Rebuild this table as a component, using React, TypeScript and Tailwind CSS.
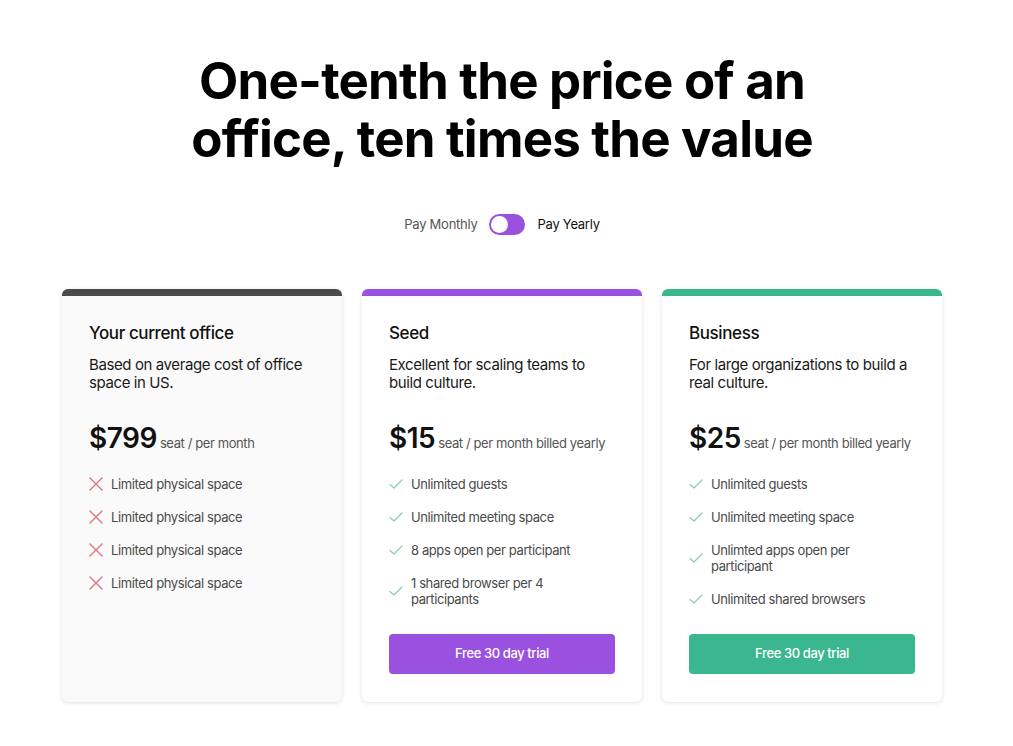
import React from "react";

const font = { fontFamily: "Inter, 'Noto Sans', sans-serif" };

function XIcon() {
  return (
    <svg width="16" height="16" viewBox="0 0 16 16" fill="none" className="shrink-0 -ml-[1px]">
      <path d="M2 2L14 14M14 2L2 14" stroke="#e0707f" strokeWidth="1.3" strokeLinecap="round" />
    </svg>
  );
}

function Check() {
  return (
    <svg width="16" height="16" viewBox="0 0 16 16" fill="none" className="shrink-0 -ml-[1px]">
      <path d="M2 8.5L6 12L14 4" stroke="#8ccbb3" strokeWidth="1.2" strokeLinecap="round" strokeLinejoin="round" />
    </svg>
  );
}

type Plan = {
  title: string;
  desc: string;
  price: string;
  unit: string;
  bar: string;
  bg: string;
  features: string[];
  negative?: boolean;
  button?: string;
};

const plans: Plan[] = [
  {
    title: "Your current office",
    desc: "Based on average cost of office space in US.",
    price: "$799",
    unit: "seat / per month",
    bar: "bg-[#4a4a4a]",
    bg: "bg-[#fafafa]",
    features: ["Limited physical space", "Limited physical space", "Limited physical space", "Limited physical space"],
    negative: true,
  },
  {
    title: "Seed",
    desc: "Excellent for scaling teams to build culture.",
    price: "$15",
    unit: "seat / per month billed yearly",
    bar: "bg-[#9b51e0]",
    bg: "bg-white",
    features: ["Unlimited guests", "Unlimited meeting space", "8 apps open per participant", "1 shared browser per 4 participants"],
    button: "bg-[#9b51e0]",
  },
  {
    title: "Business",
    desc: "For large organizations to build a real culture.",
    price: "$25",
    unit: "seat / per month billed yearly",
    bar: "bg-[#3bb78f]",
    bg: "bg-white",
    features: ["Unlimited guests", "Unlimited meeting space", "Unlimted apps open per participant", "Unlimited shared browsers"],
    button: "bg-[#3bb78f]",
  },
];

function Card({ p }: { p: Plan }) {
  return (
    <div className={`w-[280px] rounded-[6px] overflow-hidden ${p.bg} shadow-[0_1px_4px_rgba(0,0,0,0.12)] flex flex-col`}>
      <div className={`h-[7px] shrink-0 ${p.bar}`} />
      <div className="px-[27px] pt-[26px] pb-[28px] flex flex-col tracking-[-0.025em]">
        <div className="text-[17px] font-medium text-[#111] leading-[22px]">{p.title}</div>
        <div className="mt-[12px] text-[15px] text-[#1a1a1a] leading-[18px]">{p.desc}</div>
        <div className="mt-[29px] flex items-baseline gap-[3px]">
          <span className="text-[28px] font-semibold text-[#111] leading-[34px] tracking-[-0.5px]">{p.price}</span>
          <span className="text-[13px] text-[#555]">{p.unit}</span>
        </div>
        <div className="mt-[21px] flex flex-col gap-[17px]">
          {p.features.map((f, i) => (
            <div key={i} className="flex items-center gap-[7px]">
              {p.negative ? <XIcon /> : <Check />}
              <span className="text-[13px] text-[#4a4a4a] leading-[16px] max-w-[180px]">{f}</span>
            </div>
          ))}
        </div>
        {p.button && (
          <button className={`mt-[27px] h-[40px] w-[226px] rounded-[4px] ${p.button} text-white text-[13px] font-medium`}>
            Free 30 day trial
          </button>
        )}
      </div>
    </div>
  );
}

export default function App() {
  return (
    <div style={font} className="min-h-[746px] bg-white flex flex-col items-center pr-[9px]">
      <h1 className="mt-[52px] text-center text-[51px] leading-[58px] font-bold text-black tracking-[-0.8px]">
        One-tenth the price of an
        <br />
        office, ten times the value
      </h1>
      <div className="mt-[46px] flex items-center gap-[12px] text-[13px] tracking-[-0.02em]">
        <span className="text-[#555]">Pay Monthly</span>
        <div className="w-[36px] h-[21px] rounded-full bg-[#9b51e0] flex items-center px-[2px]">
          <div className="w-[17px] h-[17px] rounded-full bg-white" />
        </div>
        <span className="text-[#111]">Pay Yearly</span>
      </div>
      <div className="mt-[54px] flex gap-[20px]">
        {plans.map((p, i) => (
          <Card key={i} p={p} />
        ))}
      </div>
    </div>
  );
}
